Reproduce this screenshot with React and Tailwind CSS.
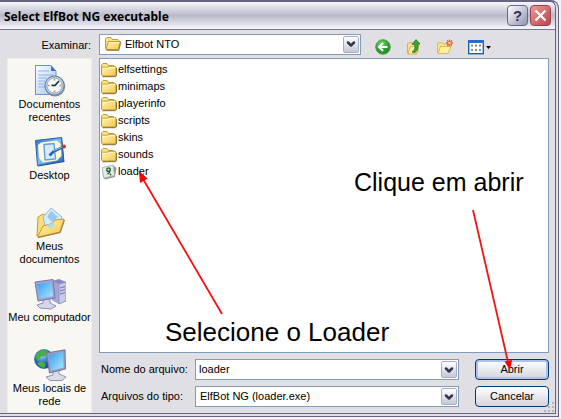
import React, { useState } from 'react';
import { ChevronDown } from 'lucide-react';

const folders = ['elfsettings', 'minimaps', 'playerinfo', 'scripts', 'skins', 'sounds'];

function FolderIcon({ className }) {
  return (
    <svg viewBox="0 0 16 16" className={className} aria-hidden="true">
      <path d="M0.5 12.5V3L2 1.5H6L7.5 3.5H12.5L13.5 4.5V6" fill="#fbe48c" stroke="#c39a35" />
      <path d="M1.5 14L0.5 13V6L1.5 5.2H6.7L8 4.3H14L15 5.2V13L14 14Z" fill="url(#folderFill)" stroke="#c0952e" />
      <path d="M1.8 6.3H7.2L8.5 5.4H13.8" fill="none" stroke="#fffbd0" />
      <path d="M1.5 14.7H14.3L15.6 13.6V6" fill="none" stroke="#7c6120" strokeWidth="0.9" />
    </svg>
  );
}

function OpenFolderIcon({ className }) {
  return (
    <svg viewBox="0 0 16 16" className={className} aria-hidden="true">
      <path d="M0.5 12.5V3L2 1.5H6L7.5 3.5H13L14 4.5V7" fill="#fbe48c" stroke="#c39a35" />
      <path d="M1 13.5L3.3 5.5H15.3L13.4 13.5Z" fill="url(#folderFill)" stroke="#c0952e" />
      <path d="M4 6.5H14.3" stroke="#fffbd0" />
      <path d="M1.5 14.4H13.8L15.8 6" fill="none" stroke="#7c6120" strokeWidth="0.8" />
    </svg>
  );
}

function LoaderIcon() {
  return (
    <svg viewBox="0 0 16 16" className="size-4" aria-hidden="true">
      <path d="M1 3.5L12 1L15.5 4L14 13L4 15.5L2 13Z" fill="#8f9893" />
      <path d="M1 3.5L12 1L13.5 11.5L3 14Z" fill="#e4ebe6" stroke="#aab3ad" strokeWidth="0.7" />
      <path d="M5.5 5.5Q6.5 3.5 8.7 4.3Q10 5.5 8.5 7.5Q6 8 5.5 5.5M8.8 7.3Q8.5 9 6.5 10" fill="none" stroke="#286343" strokeWidth="1.5" />
      <circle cx="9.5" cy="10.5" r="0.9" fill="#286343" />
    </svg>
  );
}

function RecentIcon() {
  return (
    <svg viewBox="0 0 32 32" className="size-8" aria-hidden="true">
      <path d="M1.5 0.5H17L22 6V29.5H1.5Z" fill="url(#paperFill)" stroke="#6a92cf" />
      <path d="M17 0.5V6H22Z" fill="#3f74c4" />
      <path d="M4 6H15M4 10H19M4 13H13M4 16H11M4 19H10M4 22H11" stroke="#8fb2e8" />
      <circle cx="21" cy="21.3" r="10.3" fill="#8795a8" />
      <circle cx="20.5" cy="20.5" r="9.6" fill="#b7c9dc" stroke="#6d8098" />
      <circle cx="20.5" cy="20.5" r="7.5" fill="#f4fbff" stroke="#8fa6bd" strokeWidth="0.8" />
      <path d="M20.5 13.7V15.5M20.5 25.5V27.3M13.7 20.5H15.5M25.5 20.5H27.3" stroke="#d08b3c" strokeWidth="1.5" />
      <path d="M25 16L20.5 21M17.5 20.3L21.5 20.5" stroke="#1c2b40" strokeWidth="1.7" />
    </svg>
  );
}

function DesktopIcon() {
  return (
    <svg viewBox="0 0 32 32" className="size-8" aria-hidden="true">
      <path d="M2 5L28 1.5L30.5 26L4 30.5Z" fill="#204f90" />
      <path d="M1.5 4.5L27.5 1.5L29.5 25L3.5 29.5Z" fill="url(#blueFill)" stroke="#2d62ae" />
      <path d="M4 9Q7 5.5 11 6L23 4.5L26.5 8L27.5 20L23 24.5L9 26.5L5 22Z" fill="#fff8d8" />
      <path d="M10 8.5L20 7.5L21.5 23L11 24Z" fill="#d5ecff" stroke="#5a9ddd" strokeWidth="1.3" />
      <path d="M15.5 19.5L19.5 15.5L29 11" stroke="#2d61a0" strokeWidth="2.6" fill="none" />
      <path d="M19.5 15L28 11" stroke="#91c4ef" />
      <circle cx="30" cy="10.5" r="2" fill="#c23b30" />
    </svg>
  );
}

function MyDocumentsIcon() {
  return (
    <svg viewBox="0 0 32 32" className="size-8" aria-hidden="true">
      <path d="M3 29L4 10L9 7L13 9L24 11L22 25Z" fill="#fbe07a" stroke="#c79a30" />
      <path d="M9 10L17 1L28 10L23 22L12 23Z" fill="#d7ebff" stroke="#8fb8e4" />
      <path d="M13 10L17 4L24 10L18 15Z" fill="#9cc7f2" />
      <path d="M3.5 30L9 19L18 16.5L21 13L30 12L26 25Z" fill="url(#folderFill)" stroke="#c79a30" />
      <path d="M13 18L20 15.5L20 19L16 22Z" fill="#a8dcef" />
      <path d="M4 30.7L26.3 25.6L30.5 13" fill="none" stroke="#7e641e" strokeWidth="0.8" />
    </svg>
  );
}

function ComputerIcon() {
  return (
    <svg viewBox="0 0 32 32" className="size-8" aria-hidden="true">
      <path d="M18 3L25 1L32 4V23L25 26L18 22Z" fill="#8a8ac0" />
      <path d="M18 3L25 6V26L18 22Z" fill="#a7a5d4" />
      <path d="M25 6L32 4V23L25 26Z" fill="#c8c8e8" stroke="#8587bb" strokeWidth="0.7" />
      <path d="M26 10L31 8.5M26 13L31 11.5M26 16L31 14.5" stroke="#7678b0" />
      <path d="M9 20L16 21V25L22 28L17 31L6 30L3 27L9 25Z" fill="#d6d6ec" stroke="#8a8cba" />
      <path d="M1 4L19 1.5L21 20L4 23Z" fill="#a2a4d2" stroke="#7779ae" />
      <path d="M3 6L17.5 4L19 18L5.5 20.5Z" fill="url(#screenFill)" />
    </svg>
  );
}

function NetworkIcon() {
  return (
    <svg viewBox="0 0 32 32" className="size-8" aria-hidden="true">
      <circle cx="10" cy="10" r="9.5" fill="url(#globeFill)" stroke="#195e9c" strokeWidth="0.6" />
      <path d="M1.5 8Q4 1 10 0.8L14 3L11 7L6 8L4 12ZM3 14L8 12L12 15L10 19Q5 18 3 14Z" fill="#48ad48" />
      <path d="M19 22L25 21V25L32 28L28 31.5L16 31.5L12 28L19 26Z" fill="#dcdcea" stroke="#9395b4" />
      <path d="M12.5 4L31 0.8L31.5 20L15.5 24Z" fill="#9a9dc0" stroke="#73769e" />
      <path d="M14.5 5.8L29 3L29.5 18.5L17 21.5Z" fill="url(#screenFill)" />
    </svg>
  );
}

const places = [
  { label: ['Documentos', 'recentes'], Icon: RecentIcon },
  { label: ['Desktop'], Icon: DesktopIcon },
  { label: ['Meus', 'documentos'], Icon: MyDocumentsIcon },
  { label: ['Meu computador'], Icon: ComputerIcon },
  { label: ['Meus locais de', 'rede'], Icon: NetworkIcon },
];

// shared gradients used by the icons
function IconDefs() {
  return (
    <svg className="absolute size-0" aria-hidden="true">
      <defs>
        <linearGradient id="folderFill" x1="0" y1="0" x2="1" y2="1">
          <stop offset="0" stopColor="#fff6b4" />
          <stop offset="1" stopColor="#f3c64e" />
        </linearGradient>
        <linearGradient id="paperFill" x1="0" y1="0" x2="1" y2="1">
          <stop offset="0" stopColor="#ffffff" />
          <stop offset="1" stopColor="#a3c4f3" />
        </linearGradient>
        <linearGradient id="blueFill" x1="0" y1="0" x2="1" y2="1">
          <stop offset="0" stopColor="#2a71c4" />
          <stop offset="0.5" stopColor="#7fc0f1" />
          <stop offset="1" stopColor="#215eb2" />
        </linearGradient>
        <linearGradient id="screenFill" x1="0" y1="0" x2="1" y2="1">
          <stop offset="0" stopColor="#3b9bee" />
          <stop offset="1" stopColor="#a6eaff" />
        </linearGradient>
        <radialGradient id="globeFill" cx="0.4" cy="0.3">
          <stop offset="0" stopColor="#8fdcff" />
          <stop offset="1" stopColor="#1555aa" />
        </radialGradient>
        <radialGradient id="greenFill" cx="0.4" cy="0.3">
          <stop offset="0" stopColor="#7bdc66" />
          <stop offset="1" stopColor="#219426" />
        </radialGradient>
      </defs>
    </svg>
  );
}

function ComboArrow() {
  return (
    <span className="pointer-events-none flex w-4 shrink-0 items-center justify-center rounded-xs border border-[#a9aec2] bg-linear-to-b from-white to-[#c5c7d8] text-[#34374c]">
      <ChevronDown className="size-3" strokeWidth={5} />
    </span>
  );
}

function Toolbar() {
  return (
    <div className="flex items-center gap-[15px]">
      <button type="button" aria-label="Voltar" className="size-4">
        <svg viewBox="0 0 16 16" className="size-4">
          <circle cx="8" cy="8" r="7.3" fill="url(#greenFill)" stroke="#4fa04c" />
          <path d="M12.5 8H4.5M8 4L4 8L8 12" fill="none" stroke="#fff" strokeWidth="2" />
        </svg>
      </button>
      <button type="button" aria-label="Um nível acima" className="size-4">
        <svg viewBox="0 0 16 16" className="size-4">
          <path d="M1.5 14V4.5L5 3.5L7 5L12 4V12L10 15Z" fill="#f9e28b" stroke="#d6b14e" />
          <path d="M2 15L4 8L13 6.5L10.5 15Z" fill="#fff0a0" stroke="#d8b350" />
          <path d="M6 13Q10 11 8.6 5.2H6L10 0.6L14 5H11.8Q12.5 11 9 13.5Z" fill="#3ca638" stroke="#217321" strokeWidth="0.8" />
        </svg>
      </button>
      <button type="button" aria-label="Criar nova pasta" className="size-4">
        <svg viewBox="0 0 16 16" className="size-4">
          <path d="M0.5 14V4L5 3.5L6.5 5H11V9" fill="#f9e28b" stroke="#dcb95a" />
          <path d="M1 14.5L3.5 7.5H14L11 14.5Z" fill="#fff0a0" stroke="#dcb95a" />
          <path d="M12.5 0.5V7.5M9 4H16M10 1.5L15 6.5M15 1.5L10 6.5" stroke="#ec6132" strokeWidth="1.3" />
          <circle cx="12.5" cy="4" r="1.3" fill="#ffe19b" />
        </svg>
      </button>
      <button type="button" aria-label="Modos de exibição" className="flex items-center gap-0.5">
        <svg viewBox="0 0 16 16" className="size-4">
          <rect x="0.7" y="1.7" width="14.6" height="13" fill="#fff" stroke="#195cc0" strokeWidth="1.4" />
          <path d="M0 2.5H16" stroke="#2868d3" strokeWidth="3" />
          <path d="M3 6.5H5M3 11H5" stroke="#6993b5" strokeWidth="2" />
          <path d="M7 6.5H9M11 11H13" stroke="#5a9e73" strokeWidth="2" />
          <path d="M7 11H9M11 6.5H13" stroke="#bf7258" strokeWidth="2" />
        </svg>
        <svg viewBox="0 0 5 3" className="h-[3px] w-[5px]"><path d="M0 0H5L2.5 3Z" /></svg>
      </button>
    </div>
  );
}

export default function App() {
  const [fileName, setFileName] = useState('loader');

  return (
    <div className="relative bg-[#f4f4f8] pr-0.5 pb-0.5 font-['Liberation_Sans',sans-serif] text-[11px] leading-[13px] text-black">
      <IconDefs />
      <main className="relative rounded-tr-lg border-t-2 border-r-4 border-b-4 border-double border-[#66647e] bg-[#e0dfe3]">
        <header className="flex h-7 items-center rounded-tr-md border-b border-[#777691] bg-linear-to-b from-[#f7f7fb] via-[#b9b9cb] to-[#f7f7fa] pr-1 pl-1">
          <h1 className="flex-1 pt-0.5 font-['Noto_Sans',sans-serif] text-[12px] font-bold">Select ElfBot NG executable</h1>
          <div className="flex gap-0.5">
            <button type="button" aria-label="Ajuda" className="flex size-[21px] items-center justify-center rounded-sm border border-[#666985] bg-linear-to-br from-white to-[#9295b4] text-[15px] font-bold text-[#31334a]">?</button>
            <button type="button" aria-label="Fechar" className="flex size-[21px] items-center justify-center rounded-sm border border-[#8c4856] bg-linear-to-br from-[#ed9a97] to-[#bd4048]">
              <svg viewBox="0 0 13 13" className="size-[13px]"><path d="M1.5 1.5L11.5 11.5M11.5 1.5L1.5 11.5" stroke="#fff" strokeWidth="2.3" /></svg>
            </button>
          </div>
        </header>

        <div className="flex items-center pt-[3px] pr-1.5 pl-[7px]">
          <span id="lookIn" className="w-[92px] pt-0.5 pr-2 text-right">Examinar:</span>
          <button type="button" aria-labelledby="lookIn folderName" className="flex h-[21px] w-[262px] items-stretch border border-[#7f9db9] bg-white p-px text-left">
            <span className="flex flex-1 items-center gap-1 pl-1">
              <OpenFolderIcon className="size-4" />
              <span id="folderName">Elfbot NTO</span>
            </span>
            <ComboArrow />
          </button>
          <div className="ml-3.5 pt-1.5"><Toolbar /></div>
        </div>

        <div className="flex gap-[7px] pt-[3px] pr-1.5 pl-[7px]">
          <nav className="flex w-[85px] shrink-0 flex-col border border-[#eeede8] bg-[#f8f7f2] pt-1.5">
            {places.map(({ label, Icon }) => (
              <button key={label[0]} type="button" className="flex h-[71px] flex-col items-center gap-px last:h-auto">
                <Icon />
                <span className="whitespace-nowrap">
                  {label.map((line) => <span key={line} className="block">{line}</span>)}
                </span>
              </button>
            ))}
          </nav>

          <div className="flex min-w-0 flex-1 flex-col">
            <ul className="h-[295px] border border-[#7f9db9] bg-white px-px py-0.5">
              {folders.map((name) => (
                <li key={name} className="flex h-[17px] items-center gap-px">
                  <FolderIcon className="size-4" />
                  {name}
                </li>
              ))}
              <li className="flex h-[17px] items-center gap-px">
                <LoaderIcon />
                loader
              </li>
            </ul>

            <form className="grid grid-cols-[96px_1fr_74px] gap-y-1.5 pt-1.5 pb-1.5" onSubmit={(e) => e.preventDefault()}>
              <label htmlFor="fileName" className="self-center pl-0.5">Nome do arquivo:</label>
              <div className="mr-4 flex h-[21px] border border-[#7f9db9] bg-white p-px">
                <input id="fileName" value={fileName} onChange={(e) => setFileName(e.target.value)} className="min-w-0 flex-1 pl-0.5 outline-none" />
                <ComboArrow />
              </div>
              <button type="submit" className="h-[21px] rounded-sm border border-[#003c74] bg-linear-to-b from-white to-[#d4d4e2] shadow-[inset_0_0_0_2px_#a9c2ee]">Abrir</button>

              <label htmlFor="fileType" className="self-center pl-0.5">Arquivos do tipo:</label>
              <div className="mr-4 flex h-[21px] border border-[#7f9db9] bg-white p-px">
                <select id="fileType" className="min-w-0 flex-1 appearance-none pl-[3px] outline-none">
                  <option>ElfBot NG (loader.exe)</option>
                </select>
                <ComboArrow />
              </div>
              <button type="button" className="h-[21px] rounded-sm border border-[#003c74] bg-linear-to-b from-white to-[#d4d4e2]">Cancelar</button>
            </form>
          </div>
        </div>

        {/* resize grip */}
        <svg viewBox="0 0 12 12" className="absolute right-0 bottom-0 size-3" aria-hidden="true">
          <path d="M9 1H11V3H9ZM5 5H7V7H5ZM9 5H11V7H9ZM1 9H3V11H1ZM5 9H7V11H5ZM9 9H11V11H9Z" fill="#b5b4ba" />
        </svg>
      </main>

      {/* tutorial notes drawn over the dialog */}
      <p className="pointer-events-none absolute top-[168px] left-[354px] text-[25px] leading-7">Clique em abrir</p>
      <p className="pointer-events-none absolute top-[318px] left-[165px] text-[26px] leading-7">Selecione o Loader</p>
      <svg viewBox="0 0 561 419" className="pointer-events-none absolute top-0 left-0 h-[419px] w-[561px]" aria-hidden="true">
        <path d="M222 314L143 179M473 210L508 362" stroke="#f01414" strokeWidth="1.8" />
        <path d="M139 171L147.5 178.5L140 183ZM510 370L504.5 361.5L512 360Z" fill="#ff0000" />
      </svg>
    </div>
  );
}
